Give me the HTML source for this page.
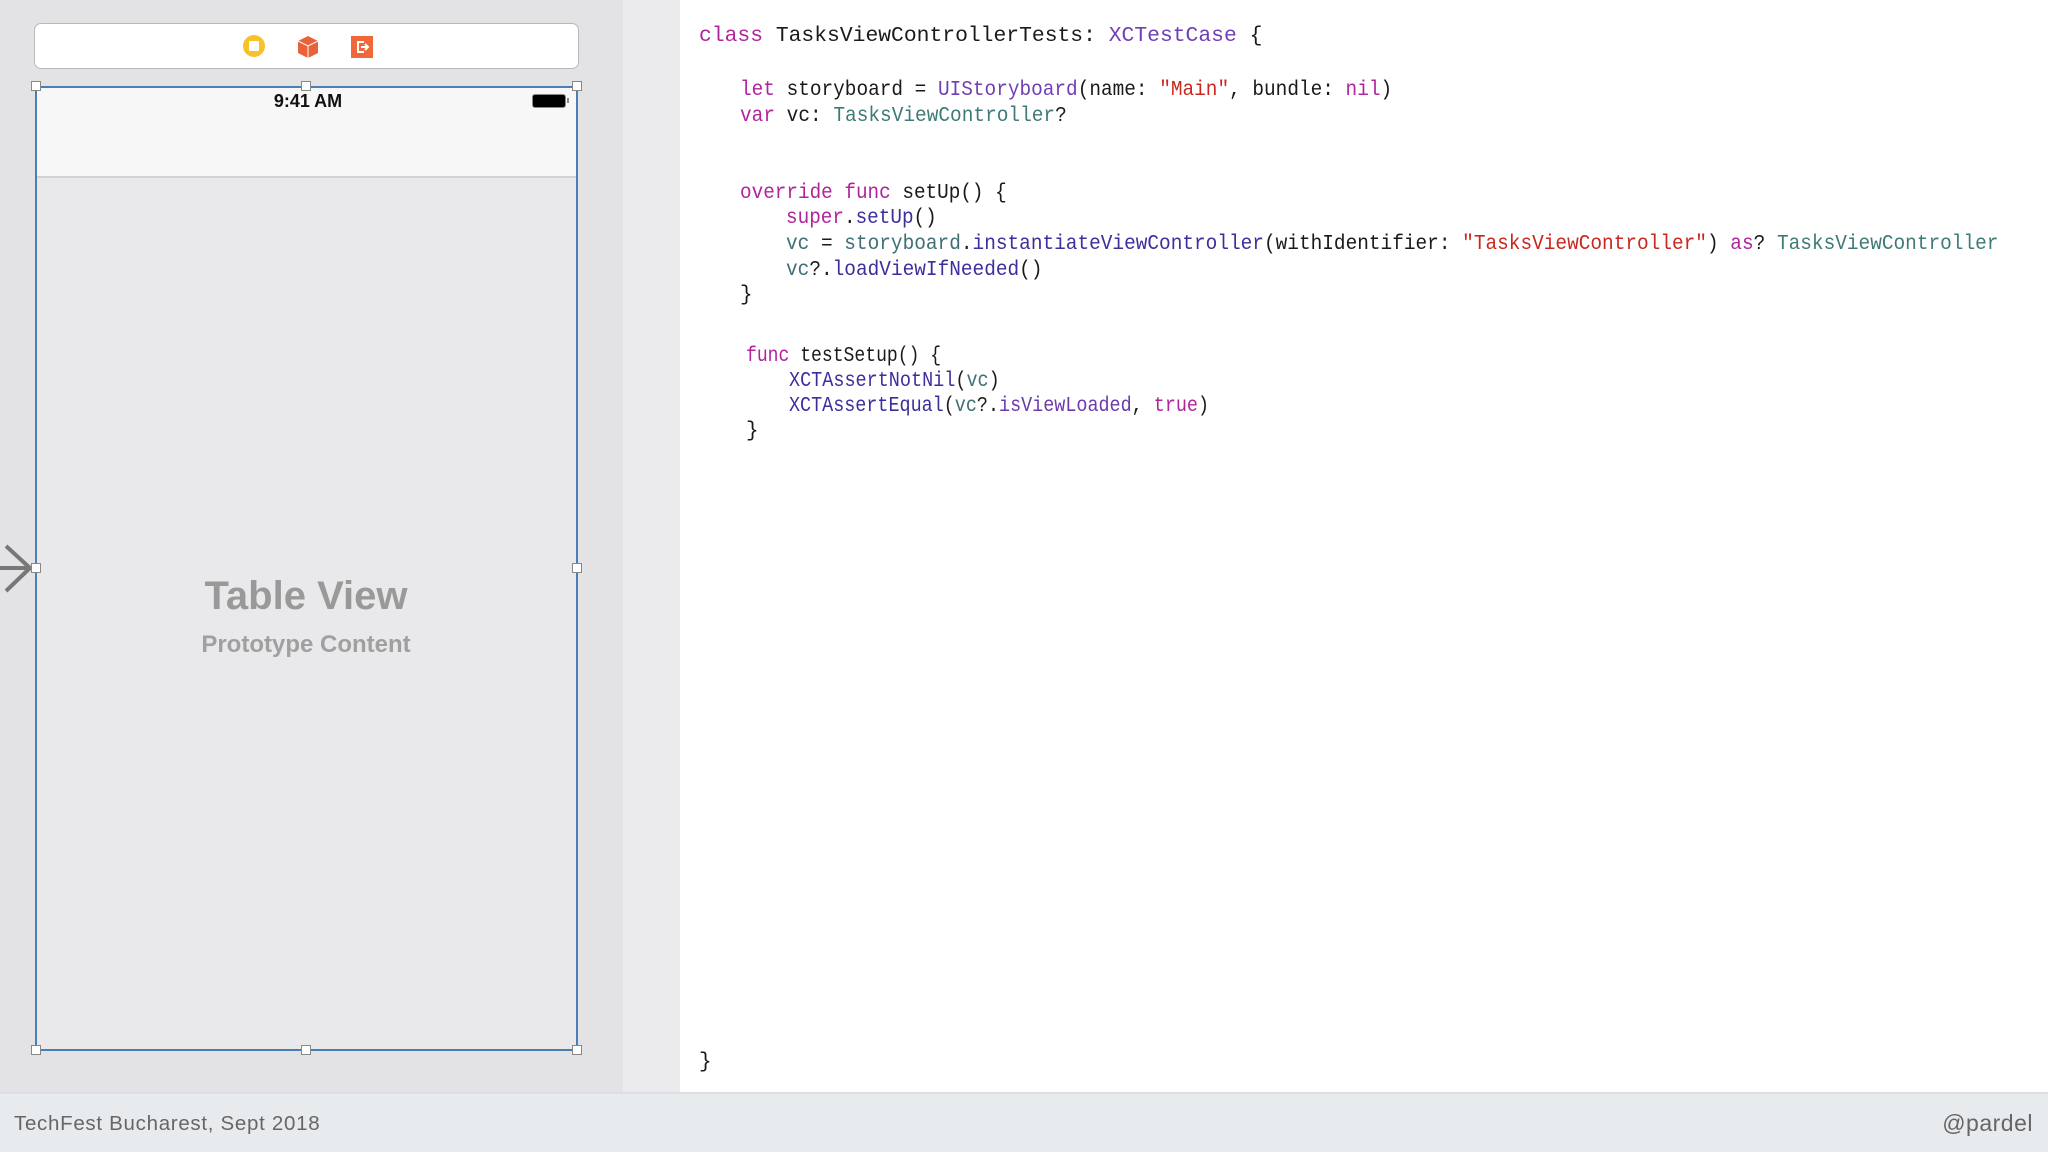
<!DOCTYPE html>
<html><head><meta charset="utf-8"><style>
*{margin:0;padding:0;box-sizing:border-box}
body{width:2048px;height:1152px;position:relative;overflow:hidden;background:#fff;font-family:"Liberation Sans",sans-serif}
.abs{position:absolute}
.code{position:absolute;font-family:"Liberation Mono",monospace;font-size:21px;white-space:pre;color:#1a1a1a;line-height:26px;transform-origin:0 0}
.k{color:#b0259c}.t{color:#6f3fb3}.c{color:#3e7a76}.s{color:#c8281e}.f{color:#3b2f9c}.v{color:#3f6f75}.p{color:#6c3aab}
.h{position:absolute;width:10px;height:10px;background:#fff;border:1.5px solid #888}
</style></head><body>
<div class="abs" style="left:0;top:0;width:623px;height:1092px;background:#e3e3e6"></div>
<div class="abs" style="left:623px;top:0;width:57px;height:1092px;background:#ebebee"></div>
<div class="abs" style="left:0;top:1092px;width:2048px;height:60px;background:#e8ebee;border-top:2px solid #dcdfe3"></div>

<div class="abs" style="left:34px;top:23px;width:545px;height:46px;background:#fff;border:1.5px solid #b8b8bc;border-radius:7px"></div>
<div class="abs" style="left:243px;top:35px;width:22px;height:22px;border-radius:50%;background:#f5c22c"></div>
<div class="abs" style="left:249px;top:41px;width:10px;height:10px;background:#fff;border-radius:1px"></div>
<svg class="abs" style="left:297px;top:35px" width="22" height="24" viewBox="0 0 22 24"><path d="M11 1 L21 6 L21 18 L11 23 L1 18 L1 6 Z" fill="#e8623a"/><path d="M1 6 L11 11 L21 6 M11 11 L11 23" stroke="#fff" stroke-width="1" fill="none"/></svg>
<svg class="abs" style="left:351px;top:36px" width="22" height="22" viewBox="0 0 22 22"><rect width="22" height="22" fill="#f0683a"/><path d="M13 6 H7 V16 H13 M10 11 H17 M14 8 L17 11 L14 14" stroke="#fff" stroke-width="2" fill="none"/></svg>

<div class="abs" style="left:35px;top:86px;width:543px;height:965px;background:#e9e9eb;border:2px solid #4a7fb5"></div>
<div class="abs" style="left:37px;top:88px;width:539px;height:90px;background:#f7f7f8;border-bottom:2px solid #d2d2d4"></div>
<div class="abs" style="left:258px;top:91px;width:100px;text-align:center;font-size:18px;font-weight:bold;color:#111">9:41 AM</div>
<div class="abs" style="left:532px;top:94px;width:34px;height:14px;border:1.5px solid #888;border-radius:3px;background:#000"></div>
<div class="abs" style="left:567px;top:98px;width:2px;height:5px;background:#888"></div>
<div class="abs" style="left:100px;top:574px;width:412px;text-align:center;font-size:40px;font-weight:bold;color:#999">Table View</div>
<div class="abs" style="left:100px;top:631px;width:412px;text-align:center;font-size:24px;font-weight:bold;color:#a0a0a0">Prototype Content</div>
<svg class="abs" style="left:0;top:543px" width="36" height="52"><path d="M0 25 H30 M6 3 L30 25 L6 48" stroke="#777" stroke-width="4" fill="none"/></svg>
<div class="h" style="left:31px;top:81px"></div><div class="h" style="left:301px;top:81px"></div><div class="h" style="left:572px;top:81px"></div>
<div class="h" style="left:31px;top:563px"></div><div class="h" style="left:572px;top:563px"></div>
<div class="h" style="left:31px;top:1045px"></div><div class="h" style="left:301px;top:1045px"></div><div class="h" style="left:572px;top:1045px"></div>

<div class="code" style="left:699px;top:24px;transform:scaleX(1.016)"><span class="k">class</span> TasksViewControllerTests: <span class="t">XCTestCase</span> {</div>
<div class="code" style="left:740px;top:78px;transform:scaleX(0.924)"><span class="k">let</span> storyboard = <span class="t">UIStoryboard</span>(name: <span class="s">"Main"</span>, bundle: <span class="k">nil</span>)</div>
<div class="code" style="left:740px;top:104px;transform:scaleX(0.926)"><span class="k">var</span> vc: <span class="c">TasksViewController</span>?</div>
<div class="code" style="left:740px;top:181px;transform:scaleX(0.92)"><span class="k">override</span> <span class="k">func</span> setUp() {</div>
<div class="code" style="left:786px;top:206px;transform:scaleX(0.92)"><span class="k">super</span>.<span class="f">setUp</span>()</div>
<div class="code" style="left:786px;top:232px;transform:scaleX(0.925)"><span class="v">vc</span> = <span class="v">storyboard</span>.<span class="f">instantiateViewController</span>(withIdentifier: <span class="s">"TasksViewController"</span>) <span class="k">as</span>? <span class="c">TasksViewController</span></div>
<div class="code" style="left:786px;top:258px;transform:scaleX(0.925)"><span class="v">vc</span>?.<span class="f">loadViewIfNeeded</span>()</div>
<div class="code" style="left:740px;top:283px">}</div>
<div class="code" style="left:746px;top:344px;transform:scaleX(0.86)"><span class="k">func</span> testSetup() {</div>
<div class="code" style="left:789px;top:369px;transform:scaleX(0.88)"><span class="f">XCTAssertNotNil</span>(<span class="v">vc</span>)</div>
<div class="code" style="left:789px;top:394px;transform:scaleX(0.877)"><span class="f">XCTAssertEqual</span>(<span class="v">vc</span>?.<span class="p">isViewLoaded</span>, <span class="k">true</span>)</div>
<div class="code" style="left:746px;top:419px">}</div>
<div class="code" style="left:699px;top:1050px">}</div>

<div class="abs" style="left:14px;top:1112px;font-size:20.5px;color:#666;letter-spacing:0.7px">TechFest Bucharest, Sept 2018</div>
<div class="abs" style="right:15px;top:1110px;font-size:23px;color:#666;letter-spacing:0.5px">@pardel</div>
</body></html>
